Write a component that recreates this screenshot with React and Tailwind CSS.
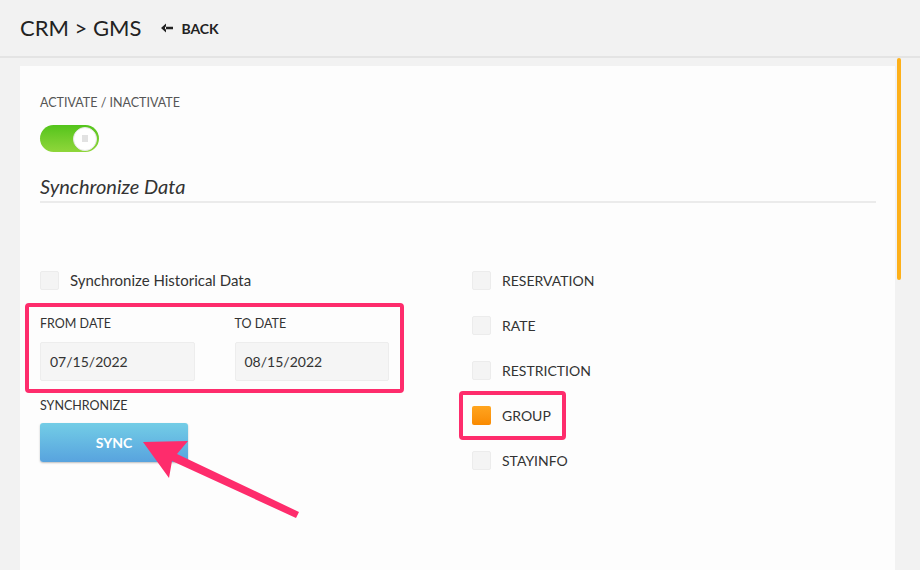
import { useState } from 'react';

function Box({ checked }) {
  return (
    <span
      className={
        checked
          ? 'h-[19px] w-[19px] shrink-0 rounded-[2px] bg-gradient-to-b from-[#ffa51e] to-[#f98a00]'
          : 'h-[19px] w-[19px] shrink-0 rounded-[2px] border border-[#ececec] bg-[#f4f4f4]'
      }
    />
  );
}

function DateField({ label, value }) {
  return (
    <div className="flex w-[155px] flex-col">
      <div className="text-[12.5px] leading-4 text-[#333]">{label}</div>
      <div className="mt-[10px] flex h-[39px] items-center rounded-[2px] border border-[#ededed] bg-[#f5f5f5] pl-[9px] text-[14px] text-[#333]">
        {value}
      </div>
    </div>
  );
}

export default function App() {
  const [active] = useState(true);
  const types = ['RESERVATION', 'RATE', 'RESTRICTION', 'GROUP', 'STAYINFO'];

  return (
    <div className="relative h-[570px] w-[920px] overflow-hidden bg-[#f2f2f2] font-['Lato',sans-serif] text-[#333]">
      <header className="flex h-[58px] items-center border-b-2 border-[#e4e4e4] pl-[20px]">
        <h1 className="text-[22px] font-normal leading-none text-[#222]">CRM &gt; GMS</h1>
        <button className="ml-[20px] flex items-center gap-[8px] text-[14px] font-bold text-[#222]">
          <svg width="12" height="10" viewBox="0 0 12 10">
            <path d="M5 0.5 L0 5 L5 9.5 Z M4 3.7 H12 V6.3 H4 Z" fill="#222" />
          </svg>
          BACK
        </button>
      </header>

      <div className="flex">
        <main className="ml-[20px] mt-[8px] h-[504px] w-[875px] bg-[#fdfdfd] px-[20px] pt-[29px]">
          <div className="text-[12.5px] leading-4 text-[#555]">ACTIVATE / INACTIVATE</div>
          <div
            className={
              active
                ? 'mt-[14px] flex h-[27px] w-[59px] items-center justify-end rounded-full bg-gradient-to-b from-[#52c41a] to-[#8fd63a] pr-[2px]'
                : 'mt-[14px] flex h-[27px] w-[59px] items-center rounded-full bg-gray-300 pl-[2px]'
            }
          >
            <span className="flex h-[24px] w-[24px] items-center justify-center rounded-full border border-[#e6e6e6] bg-white">
              <span className="h-[7px] w-[6px] bg-[#e2e2e2]" />
            </span>
          </div>

          <h2 className="mt-[22px] text-[20px] italic leading-6 text-[#333]">Synchronize Data</h2>
          <div className="mt-[3px] h-[2px] w-[836px] bg-[#ebebeb]" />

          <div className="mt-[68px] flex">
            <section className="w-[432px]">
              <label className="flex h-[19px] items-center gap-[11px] text-[15px]">
                <Box />
                Synchronize Historical Data
              </label>

              <div className="-ml-[15px] mt-[13px] w-[379px] rounded-[4px] border-4 border-[#fe2c6c] px-[11px] pb-[8px] pt-[9px]">
                <div className="flex gap-[40px]">
                  <DateField label="FROM DATE" value="07/15/2022" />
                  <DateField label="TO DATE" value="08/15/2022" />
                </div>
              </div>

              <div className="mt-[5px] text-[12.5px] leading-4 text-[#333]">SYNCHRONIZE</div>
              <button className="mt-[9px] flex h-[39px] w-[148px] items-center justify-center rounded-[3px] bg-gradient-to-b from-[#73cde6] to-[#58a3de] text-[14px] font-bold text-white shadow-[0_1px_2px_rgba(0,0,0,0.25)]">
                SYNC
              </button>
            </section>

            <section className="flex flex-col gap-[26px]">
              {types.map((t) =>
                t === 'GROUP' ? (
                  <div key={t} className="-my-[15px] -ml-[13px] w-[107px] rounded-[4px] border-4 border-[#fe2c6c] py-[11px] pl-[9px]">
                    <div className="flex h-[19px] items-center gap-[11px] text-[14px]">
                      <Box checked />
                      {t}
                    </div>
                  </div>
                ) : (
                  <label key={t} className="flex h-[19px] items-center gap-[11px] text-[14px]">
                    <Box />
                    {t}
                  </label>
                )
              )}
            </section>
          </div>
        </main>
        <div className="ml-[2px] h-[222px] w-[4px] rounded-full bg-[#fdb01a]" />
      </div>

      <svg className="pointer-events-none absolute left-0 top-0" width="920" height="570">
        <polygon points="143,442 188,441 177,454 299,512 296,518 172,461 169,478" fill="#fe2c6c" />
      </svg>
    </div>
  );
}
